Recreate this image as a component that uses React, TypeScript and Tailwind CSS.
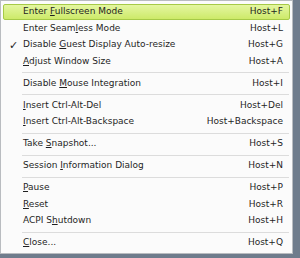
import React from 'react';

type Item = { pre: string; key: string; post: string; shortcut: string; checked?: boolean; active?: boolean };

const groups: Item[][] = [
  [
    { pre: 'Enter ', key: 'F', post: 'ullscreen Mode', shortcut: 'Host+F', active: true },
    { pre: 'Enter Seam', key: 'l', post: 'ess Mode', shortcut: 'Host+L' },
    { pre: 'Disable ', key: 'G', post: 'uest Display Auto-resize', shortcut: 'Host+G', checked: true },
    { pre: '', key: 'A', post: 'djust Window Size', shortcut: 'Host+A' },
  ],
  [{ pre: 'Disable ', key: 'M', post: 'ouse Integration', shortcut: 'Host+I' }],
  [
    { pre: '', key: 'I', post: 'nsert Ctrl-Alt-Del', shortcut: 'Host+Del' },
    { pre: '', key: 'I', post: 'nsert Ctrl-Alt-Backspace', shortcut: 'Host+Backspace' },
  ],
  [{ pre: 'Take ', key: 'S', post: 'napshot...', shortcut: 'Host+S' }],
  [{ pre: 'Session ', key: 'I', post: 'nformation Dialog', shortcut: 'Host+N' }],
  [
    { pre: '', key: 'P', post: 'ause', shortcut: 'Host+P' },
    { pre: '', key: 'R', post: 'eset', shortcut: 'Host+R' },
    { pre: 'ACPI S', key: 'h', post: 'utdown', shortcut: 'Host+H' },
  ],
  [{ pre: '', key: 'C', post: 'lose...', shortcut: 'Host+Q' }],
];

function Row({ item }: { item: Item }) {
  return (
    <div
      className={`relative flex h-[16.5px] items-center pl-[19px] pr-[6px] ${
        item.active ? 'rounded-[2px] border border-[#a6ca47] bg-gradient-to-b from-[#e4f6a0] to-[#cdea68]' : 'border border-transparent'
      }`}
    >
      <span className="absolute left-[5px] top-[0px] text-[11px]">{item.checked ? '✓' : ''}</span>
      <span className="flex-1 whitespace-nowrap">
        {item.pre}
        <span className="underline underline-offset-[1px]">{item.key}</span>
        {item.post}
      </span>
      <span className="whitespace-nowrap">{item.shortcut}</span>
    </div>
  );
}

export default function App() {
  return (
    <div className="h-[258px] w-[300px] overflow-hidden bg-[#6f7c8c]">
      <div
        className="h-[254px] w-[293px] border border-[#b9bcc0] bg-[#fbfbfb] px-[2px] pt-[2.75px] text-[9px] text-[#1f1f1f]"
        style={{ fontFamily: '"DejaVu Sans", sans-serif' }}
      >
        {groups.map((g, i) => (
          <div key={i}>
            {i > 0 && (
              <div className="flex h-[5.5px] items-center pl-[19px] pr-[1px]">
                <div className="h-px w-full bg-[#dcdcdc]" />
              </div>
            )}
            {g.map((item, j) => (
              <Row key={j} item={item} />
            ))}
          </div>
        ))}
      </div>
    </div>
  );
}
